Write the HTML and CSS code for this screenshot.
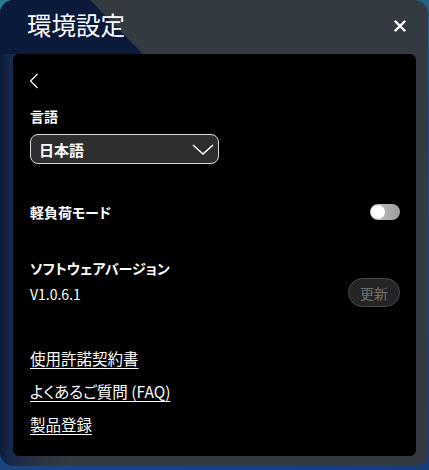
FILE: index.html
```html
<!DOCTYPE html>
<html lang="ja">
<head>
<meta charset="utf-8">
<link rel="stylesheet" href="styles.css">
</head>
<body>
<div class="window">
  <div class="header">
    <div class="title">環境設定</div>
    <div class="close">
      <svg width="12" height="12" viewBox="0 0 12 12"><path d="M1.5 1.5 L10.5 10.5 M10.5 1.5 L1.5 10.5" stroke="#fff" stroke-width="2.4" stroke-linecap="round"/></svg>
    </div>
  </div>
  <div class="panel">
    <div class="back">
      <svg width="10" height="16" viewBox="0 0 10 16"><polyline points="8.5,1 1.5,8 8.5,15" fill="none" stroke="#fff" stroke-width="1.2"/></svg>
    </div>
    <div class="label lang-label">言語</div>
    <div class="select">
      <span>日本語</span>
      <svg width="22" height="11" viewBox="0 0 22 11"><polyline points="1,1 11,10 21,1" fill="none" stroke="#fff" stroke-width="1.5"/></svg>
    </div>
    <div class="row lite-row">
      <div class="label">軽負荷モード</div>
      <div class="toggle"><div class="knob"></div></div>
    </div>
    <div class="row version-row">
      <div class="version-text">
        <div class="label">ソフトウェアバージョン</div>
        <div class="version">V1.0.6.1</div>
      </div>
      <div class="update">更新</div>
    </div>
    <div class="links">
      <a class="link">使用許諾契約書</a>
      <a class="link">よくあるご質問 (FAQ)</a>
      <a class="link">製品登録</a>
    </div>
  </div>
</div>
</body>
</html>
```

FILE: styles.css
```css
* { box-sizing: border-box; }
html, body {
  margin: 0;
  width: 429px;
  height: 470px;
  overflow: hidden;
}
body {
  background: linear-gradient(160deg, #2a7a92 0%, #1d4d8a 45%, #163f7a 100%);
  font-family: "Noto Sans CJK JP", "Noto Sans", sans-serif;
  font-feature-settings: "palt";
  color: #fff;
}
.window {
  position: relative;
  width: 428px;
  height: 466px;
  border-radius: 14px;
  background: linear-gradient(90deg, #0c1b3b 0px, #17284a 10px, #2c3440 40px, #343a41 70px);
  display: flex;
  flex-direction: column;
  overflow: hidden;
}
.window::before {
  content: "";
  position: absolute;
  left: 0;
  top: 0;
  width: 150px;
  height: 54px;
  background: #0b1a3b;
  clip-path: polygon(0 0, 90px 0, 143px 54px, 0 54px);
}
.header {
  position: relative;
  height: 54px;
  display: flex;
  align-items: center;
  justify-content: space-between;
  padding: 0 22px 4px 27px;
}
.title {
  font-size: 24.5px;
  line-height: 1;
  font-feature-settings: normal;
}
.close {
  display: flex;
  margin-top: 2px;
}
.panel {
  position: relative;
  margin: 0 12px 0 13px;
  height: 402px;
  background: #000;
  border-radius: 6px;
  padding: 19px 16px 0 17px;
  display: flex;
  flex-direction: column;
}
.back {
  display: flex;
  margin-left: -1px;
}
.label {
  font-size: 14px;
  font-weight: bold;
  line-height: 20px;
}
.lang-label {
  margin-top: 17px;
}
.select {
  margin-top: 8px;
  width: 189px;
  height: 30px;
  border: 1px solid #d8d8d8;
  border-radius: 8px;
  background: #2e2e2e;
  display: flex;
  align-items: center;
  justify-content: space-between;
  padding: 0 4px 0 8px;
  font-size: 15px;
  font-weight: bold;
}
.row {
  display: flex;
  justify-content: space-between;
  align-items: center;
}
.lite-row {
  margin-top: 38px;
}
.toggle {
  width: 30px;
  height: 16px;
  border-radius: 8px;
  background: linear-gradient(90deg, #c8c8c8, #9c9c9c);
  display: flex;
  align-items: center;
  padding-left: 1px;
}
.knob {
  width: 14px;
  height: 14px;
  border-radius: 50%;
  background: #fff;
}
.version-row {
  margin-top: 36px;
  align-items: flex-start;
}
.version {
  margin-top: 6px;
  font-size: 14px;
  line-height: 20px;
}
.update {
  margin-top: 20px;
  width: 52px;
  height: 29px;
  border-radius: 15px;
  border: 1px solid #4a4a4a;
  background: #242424;
  color: #707070;
  font-size: 14px;
  display: flex;
  align-items: center;
  justify-content: center;
}
.links {
  margin-top: 40px;
  display: flex;
  flex-direction: column;
  align-items: flex-start;
  gap: 11px;
}
.link {
  font-size: 15.5px;
  line-height: 22px;
  color: #fff;
  text-decoration: underline;
  text-underline-offset: 3px;
  text-decoration-thickness: 1px;
}
```
